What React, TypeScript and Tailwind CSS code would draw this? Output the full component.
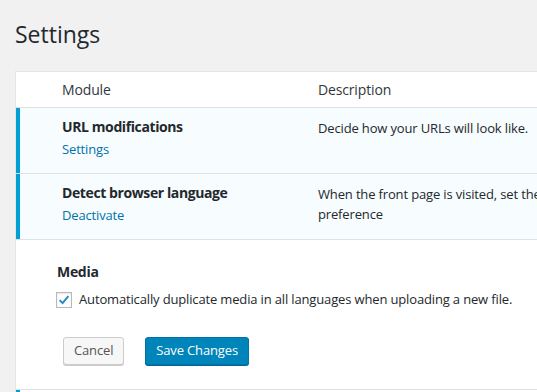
import React, { useState } from 'react';

const modules = [
    {
        name: 'URL modifications',
        link: 'Settings',
        description: 'Decide how your URLs will look like.',
    },
    {
        name: 'Detect browser language',
        link: 'Deactivate',
        description: 'When the front page is visited, set the language according to the browser preference',
    },
];

function CheckIcon() {
    return (
        <svg viewBox="0 0 16 16" className="w-[14px] h-[14px]">
            <path d="M3 8.2 L6.4 11.6 L13 3.6" fill="none" stroke="#1e8cbe" strokeWidth="2.2" />
        </svg>
    );
}

export default function App() {
    const [duplicate, setDuplicate] = useState(true);

    return (
        <div
            className="min-h-screen w-full bg-[#f1f1f1] overflow-hidden text-[13px] text-[#444] tracking-[-0.15px]"
            style={{ fontFamily: '"Open Sans", "Noto Sans", sans-serif' }}
        >
            <h1 className="pl-[15px] pt-[20px] text-[23px] leading-[29px] text-[#23282d] font-normal tracking-normal">Settings</h1>

            <div className="ml-[15px] mt-[22px] w-[800px] bg-white border border-[#e5e5e5] border-r-0">
                {/* table header */}
                <div className="flex h-[36px] items-center border-b border-[#e1e1e1] text-[14px] text-[#32373c]">
                    <div className="w-[46px] shrink-0" />
                    <div className="w-[256px] shrink-0">Module</div>
                    <div>Description</div>
                </div>

                {modules.map((m) => (
                    <div key={m.name} className="flex h-[66px] bg-[#f7fcfe] border-b border-[#e1e1e1]">
                        <div className="w-[4px] shrink-0 bg-[#00a0d2]" />
                        <div className="w-[42px] shrink-0" />
                        <div className="w-[256px] shrink-0 pt-[9px]">
                            <div className="text-[14px] font-bold text-[#23282d] leading-[20px] tracking-[-0.4px]">{m.name}</div>
                            <a className="block mt-[2px] text-[#0073aa] leading-[20px] cursor-pointer">{m.link}</a>
                        </div>
                        <div className="pt-[10px] w-[470px] shrink-0 leading-[20px] text-[#23282d]">
                            {m.description}
                        </div>
                    </div>
                ))}

                {/* media */}
                <div className="pl-[41px] pt-[22px] pb-[24px]">
                    <div className="text-[14px] font-bold text-[#23282d] leading-[20px] tracking-[-0.3px]">Media</div>
                    <label className="flex items-center mt-[8px] -ml-[1px] cursor-pointer">
                        <span
                            onClick={() => setDuplicate(!duplicate)}
                            className="w-[16px] h-[16px] shrink-0 border border-[#b4b9be] bg-white flex items-center justify-center shadow-[inset_0_1px_2px_rgba(0,0,0,0.1)]"
                        >
                            {duplicate && <CheckIcon />}
                        </span>
                        <span className="ml-[7px] text-[#23282d]">
                            Automatically duplicate media in all languages when uploading a new file.
                        </span>
                    </label>

                    <div className="flex items-center gap-[21px] mt-[27px] ml-[6px]">
                        <button className="h-[28px] px-[10px] rounded-[3px] border border-[#ccc] bg-[#f7f7f7] text-[#555] shadow-[0_1px_0_#ccc]">
                            Cancel
                        </button>
                        <button className="h-[28px] px-[10px] rounded-[3px] border border-[#0073aa] bg-[#0085ba] text-white shadow-[0_1px_0_#006799]">
                            Save Changes
                        </button>
                    </div>
                </div>

                <div className="flex h-[4px] border-t border-[#e1e1e1]">
                    <div className="w-[4px] bg-[#00a0d2]" />
                </div>
            </div>
        </div>
    );
}
